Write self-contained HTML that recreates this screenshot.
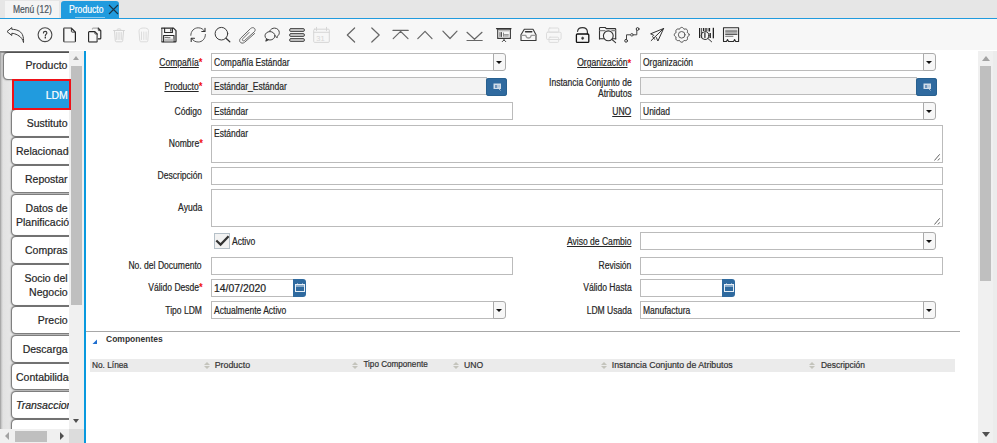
<!DOCTYPE html>
<html><head><meta charset="utf-8">
<style>
*{box-sizing:border-box}
html,body{margin:0;padding:0}
body{width:997px;height:443px;overflow:hidden;position:relative;background:#fff;font-family:"Liberation Sans",sans-serif;color:#333}
.lbl,.fld,.tab span,.ttl,.hdr{-webkit-text-stroke:0.2px currentColor}
.a{position:absolute}
.lbl{position:absolute;font-size:10px;letter-spacing:0;white-space:nowrap;text-align:right;color:#262626;line-height:11px;transform:scaleX(0.855);transform-origin:100% 50%}
.u{text-decoration:underline;text-underline-offset:1px}
.req{color:#f01010;font-size:11px;font-weight:bold;vertical-align:top;position:relative;top:0.6px;letter-spacing:0;margin-left:0;line-height:11px;-webkit-text-stroke:0}
.fld{position:absolute;border:1px solid #bbb;background:#fff;font-size:10px;letter-spacing:0;white-space:nowrap;color:#262626;padding-left:2px;line-height:15px}
.gray{background:#f3f3f3}
.fld .a{transform:scaleX(0.85);transform-origin:0 50%}
.ddb{position:absolute;border:1px solid #aaa;border-radius:0 3px 3px 0;background:#f7f7f7}
.ddb:after{content:"";position:absolute;left:2px;top:7px;border-left:3px solid transparent;border-right:3px solid transparent;border-top:3px solid #111}
.bbtn{position:absolute;background:#2f6a9f;border-radius:3px}
.tab{position:absolute;left:12px;width:80px;background:#fff;border-radius:4px 0 0 4px;box-shadow:0 0 1.5px 0.5px rgba(0,0,0,.55);font-size:10.5px;color:#262626;line-height:12px;white-space:nowrap;overflow:hidden}
.tab span{position:absolute;right:25px;text-align:right}
.tab span.ov{right:auto;left:4px;text-align:left}
.hdr{position:absolute;font-size:9px;white-space:nowrap;color:#333;line-height:11px}
.sort{position:absolute;width:6px;height:8px}
.sort:before{content:"";position:absolute;left:0;top:0;border-left:3px solid transparent;border-right:3px solid transparent;border-bottom:3px solid #c4c4bc}
.sort:after{content:"";position:absolute;left:0;top:4px;border-left:3px solid transparent;border-right:3px solid transparent;border-top:3px solid #c4c4bc}
.ic{position:absolute;top:26px}
</style></head><body>

<!-- top tab bar -->
<div class="a" style="left:0;top:0;width:997px;height:18px;background:#e6e6e6"></div>
<div class="a" style="left:5px;top:1px;width:54px;height:17px;background:#f4f4f4"></div>
<div class="a ttl" style="left:13px;top:3.8px;font-size:10px;color:#4b5560;line-height:12px;white-space:nowrap;transform:scaleX(0.85);transform-origin:0 50%">Menú (12)</div>
<div class="a" style="left:61px;top:1px;width:58px;height:17px;background:#219bde;border-radius:3px 3px 0 0"></div>
<div class="a ttl" style="left:69px;top:4px;font-size:10px;color:#fff;line-height:12px;white-space:nowrap;transform:scaleX(0.86);transform-origin:0 50%">Producto</div>
<div class="a" style="left:75px;top:17px;width:30px;height:1px;background:#8ccbef"></div>
<svg class="a" style="left:108px;top:4px" width="11" height="11" viewBox="0 0 11 11"><path d="M1 1L10 10M10 1L1 10" stroke="#1b3446" stroke-width="1.1" fill="none"/></svg>
<div class="a" style="left:0;top:18px;width:997px;height:1px;background:#219bde"></div>

<!-- toolbar -->
<div class="a" style="left:0;top:19px;width:997px;height:31px;background:#f7f7f7"></div>
<div id="toolbar">
<svg class="a" style="left:0;top:0" width="760" height="50" viewBox="0 0 760 50">
<g fill="none" stroke-linecap="round" stroke-linejoin="round">
<!-- undo -->
<path d="M7.3 31.3L11.8 27.6V29.3C16.3 29.4 20.6 30.8 22.4 34.6C23.5 37 23.7 40 23.5 42.5C22.9 39.6 21.3 36.9 17.5 35C15.6 34 13.6 33.3 11.8 33.3V35.1Z" stroke="#3a3a3a" stroke-width="1"/>
<!-- help -->
<circle cx="45" cy="34.7" r="6.9" stroke="#4a4a4a" stroke-width="1.1"/>
<path d="M43.4 33C43.4 31.9 44.2 31.4 45.2 31.4C46.2 31.4 46.9 32 46.9 32.9C46.9 34 45.3 34.3 45.3 35.8" stroke="#3a3a3a" stroke-width="1.1"/>
<path d="M45.3 37.2V37.9" stroke="#3a3a3a" stroke-width="1.4"/>
<!-- new -->
<path d="M63.8 41V28.9C63.8 28.5 64.1 28.2 64.5 28.2H71.4L75.4 32.1V41C75.4 41.4 75.1 41.7 74.7 41.7H64.5C64.1 41.7 63.8 41.4 63.8 41Z" stroke="#222" stroke-width="1.2"/>
<path d="M64.8 28.2H71M64.8 41.7H74.4" stroke="#a8a8a8" stroke-width="1.2"/>
<path d="M71.4 28.4V31.4C71.4 31.8 71.7 32.1 72.1 32.1H75.1" stroke="#333" stroke-width="1"/>
<!-- copy -->
<path d="M98.3 28.1L100.8 30.6V38.3C100.8 38.6 100.6 38.9 100.3 38.9H97.6" stroke="#222" stroke-width="1.1"/>
<path d="M92.4 29V28.6C92.4 28.3 92.6 28.1 92.9 28.1H98.3" stroke="#999" stroke-width="1"/>
<path d="M98.3 28.3V30.1C98.3 30.4 98.5 30.6 98.8 30.6H100.6" stroke="#333" stroke-width="0.9"/>
<path d="M88.6 32.3C88.6 31.9 88.9 31.6 89.3 31.6H94.8L97.2 34V41.2C97.2 41.6 96.9 41.9 96.5 41.9H89.3C88.9 41.9 88.6 41.6 88.6 41.2Z" stroke="#222" stroke-width="1.1"/>
<path d="M97.2 35V41M89.5 41.9H96" stroke="#888" stroke-width="1.1"/>
<path d="M94.8 31.8V33.5C94.8 33.8 95 34 95.3 34H97" stroke="#444" stroke-width="0.9"/>
<!-- trash disabled -->
<g stroke="#d4d4d4" stroke-width="1">
<path d="M113.6 30.5H124.4M116.5 30.3C116.8 28.3 121.2 28.3 121.5 30.3M114.5 30.7L115.3 40.7C115.4 41.5 115.8 41.8 116.5 41.8H121.5C122.2 41.8 122.6 41.5 122.7 40.7L123.6 30.7"/>
<path d="M116.8 32.5V39.5M119 32.5V39.5M121.2 32.5V39.5"/>
</g>
<g stroke="#dcdcdc" stroke-width="1">
<path d="M139 30.5C139 28.5 141.5 28 143.8 28C146.2 28 148.5 28.5 148.5 30.5L147.8 40.8C147.7 41.5 147.3 41.8 146.6 41.8H141C140.3 41.8 139.9 41.5 139.8 40.8Z"/>
<path d="M141.5 32V39.5M143.8 32V39.5M146.1 32V39.5"/>
</g>
<!-- save -->
<path d="M161.6 28.2H173.5L176 30.7V41.2C176 41.5 175.7 41.8 175.4 41.8H162.2C161.9 41.8 161.6 41.5 161.6 41.2Z" stroke="#2a2a2a" stroke-width="1.2"/>
<path d="M161.6 29V41.2" stroke="#888" stroke-width="1.2"/>
<path d="M164.6 28.3V32.5H172.4V28.3" stroke="#2a2a2a" stroke-width="1.1"/>
<path d="M170.8 29.3V31.2" stroke="#2a2a2a" stroke-width="1"/>
<path d="M163.6 41.6V35.5H174V41.6" stroke="#2a2a2a" stroke-width="1.1"/>
<rect x="164.2" y="38.7" width="9.2" height="2.8" fill="#bdbdbd" stroke="none"/>
<path d="M165 37.4H167.5M168 37.7H170" stroke="#555" stroke-width="0.9"/>
<!-- refresh -->
<path d="M190.8 35.3C190.8 31 194.2 27.8 198.2 27.8C201.3 27.8 203.4 29.3 204.5 31.2" stroke="#555" stroke-width="1"/>
<path d="M205 28.2V31.5H201.8" stroke="#333" stroke-width="1.1"/>
<path d="M205.4 34.5C205.4 38.8 202.2 42 198.2 42C195.2 42 193 40.6 191.9 38.6" stroke="#555" stroke-width="1"/>
<path d="M191.2 41.5V38.3H194.5" stroke="#333" stroke-width="1.1"/>
<!-- find -->
<circle cx="221.4" cy="33.7" r="6.3" stroke="#3a3a3a" stroke-width="1"/>
<path d="M226 38.3L229.8 41.8" stroke="#333" stroke-width="1.2"/>
<!-- attach -->
<path d="M254.6 33.5L244.6 42.3C243 43.6 240.8 43.4 239.9 41.7C239.3 40.4 239.7 39.1 240.7 38.2L250.5 28.6C251.8 27.4 253.7 27.3 254.7 28.6C255.5 29.7 255.2 31 254.2 31.9L244.6 40.5C243.9 41.1 242.9 41 242.5 40.3C242.2 39.7 242.4 39.1 243 38.5L249 32.5" stroke="#666" stroke-width="1"/>
<!-- chat -->
<path d="M269.6 31C270.6 29.2 272.6 28.1 274.5 28.1C277.2 28.1 279.3 30.1 279.3 32.6C279.3 34.3 278.5 35.5 277.2 36.4L277.3 37.6L275.9 36.9" stroke="#444" stroke-width="1"/>
<ellipse cx="270" cy="35.8" rx="5" ry="4.2" stroke="#444" stroke-width="1"/>
<path d="M266.5 39L265.8 41.2L268.3 39.8" stroke="#333" stroke-width="1" fill="#444"/>
<!-- menu bars -->
<g stroke="#555" stroke-width="1" fill="#bdbdbd">
<rect x="289.5" y="28.5" width="15" height="3" rx="1.5"/>
<rect x="289.5" y="33.5" width="15" height="3" rx="1.5"/>
<rect x="289.5" y="38.5" width="15" height="3" rx="1.5"/>
</g>
<!-- calendar disabled -->
<g stroke="#d6d6d6" stroke-width="1">
<rect x="313.7" y="29.2" width="15.6" height="13.2" rx="1"/>
<path d="M313.8 32.3H329.2M316.5 27.3V30.5M326.5 27.3V30.5"/>
</g>
<text x="316.3" y="40.6" font-family="Liberation Sans" font-size="7.5" fill="#d6d6d6" stroke="none">31</text>
<!-- chevrons -->
<g stroke="#666" stroke-width="1.2">
<path d="M354.6 28L347.3 35L354.6 42"/>
<path d="M371.8 28L379.2 35L371.8 42"/>
<path d="M393 30.4H408.2M393.2 38.6L400.6 31.4L408 38.6"/>
<path d="M417.8 38.6L425 31.3L432 38.6"/>
<path d="M442.9 31.2L450 38.5L457 31.2"/>
<path d="M467 32.3L474.5 39.3L482 32.3M467 40.5H482.2"/>
</g>
<!-- presentation -->
<path d="M496.5 28.7H511" stroke="#333" stroke-width="1.2"/>
<rect x="497.7" y="29.2" width="12.7" height="9.2" stroke="#3a3a3a" stroke-width="1.1"/>
<rect x="498.3" y="29.8" width="11.5" height="1.6" fill="#bbb" stroke="none"/>
<path d="M500 32.5V36.5M501.5 32.5V36.5" stroke="#555" stroke-width="1"/>
<path d="M503.5 33V36.3M504.5 34.7H508.3M504.5 36H508.3" stroke="#888" stroke-width="1"/>
<path d="M504 39V40M502.3 41.6L504 39.9L505.7 41.6" stroke="#444" stroke-width="1"/>
<!-- archive -->
<path d="M524.3 29.2H533L536 34.8V40.5H521V34.8Z" stroke="#3a3a3a" stroke-width="1.1"/>
<path d="M525.5 31.7H531.8" stroke="#333" stroke-width="1.4"/>
<path d="M521.5 35.3H525.8C526.3 37.4 527.3 38 528.5 38C529.7 38 530.7 37.4 531.2 35.3H535.5" stroke="#999" stroke-width="1.3"/>
<!-- print disabled -->
<g stroke="#dcdcdc" stroke-width="1">
<rect x="548.8" y="28" width="10" height="4.2" rx="1"/>
<rect x="546.5" y="32.2" width="14.6" height="7.3" rx="1.2"/>
<rect x="549" y="37.2" width="9.6" height="5.2" rx="1"/>
</g>
<!-- lock -->
<path d="M577.6 31.3C577.8 29 579.8 27.6 582.5 27.6C585.2 27.6 587.3 29.2 587.4 31.8V34" stroke="#333" stroke-width="1.2"/>
<rect x="576.4" y="34" width="12.4" height="8.4" rx="1" stroke="#111" stroke-width="1.3"/>
<ellipse cx="582.6" cy="38.2" rx="1" ry="1.3" fill="#333" stroke="#555" stroke-width="0.6"/>
<!-- zoom across -->
<path d="M599.5 39V28.2C599.5 27.8 599.8 27.5 600.2 27.5H605.2L606.3 28.6H615C615.4 28.6 615.7 28.9 615.7 29.3V39" stroke="#333" stroke-width="1.1"/>
<path d="M599.5 38.8H603.5M612.8 38.8H615.7" stroke="#333" stroke-width="1.1"/>
<path d="M600 30.6H605M611.8 30.6H615.2" stroke="#888" stroke-width="1.2"/>
<circle cx="608.3" cy="35.8" r="4.9" stroke="#333" stroke-width="1.1"/>
<path d="M611.8 39.3L615.6 42.6" stroke="#333" stroke-width="1.1"/>
<!-- workflow -->
<path d="M626.5 39.5V34.8H636.8V30.2" stroke="#444" stroke-width="1"/>
<circle cx="626.1" cy="40.8" r="1.4" stroke="#333" stroke-width="1" fill="#f6f6f6"/>
<circle cx="631.9" cy="34.8" r="1.3" stroke="#555" stroke-width="1" fill="#f6f6f6"/>
<circle cx="637.6" cy="29" r="1.4" stroke="#333" stroke-width="1" fill="#f6f6f6"/>
<!-- send -->
<path d="M663.6 28.5L650.6 33.8L653.8 35.4M663.6 28.5L657.9 41L656.3 37.5M663.6 28.5L651.2 40.6M652.6 36.6L654.6 39.3" stroke="#333" stroke-width="1"/>
<!-- gear -->
<path d="M689.10 34.80 L689.06 35.16 L688.96 35.51 L688.79 35.85 L688.56 36.16 L688.27 36.45 L687.95 36.70 L687.61 36.91 L687.24 37.10 L687.37 37.48 L687.46 37.88 L687.51 38.28 L687.51 38.68 L687.45 39.07 L687.34 39.43 L687.16 39.75 L686.93 40.03 L686.65 40.26 L686.33 40.44 L685.97 40.55 L685.58 40.61 L685.18 40.61 L684.78 40.56 L684.38 40.47 L684.00 40.34 L683.81 40.71 L683.60 41.05 L683.35 41.37 L683.06 41.66 L682.75 41.89 L682.41 42.06 L682.06 42.16 L681.70 42.20 L681.34 42.16 L680.99 42.06 L680.65 41.89 L680.34 41.66 L680.05 41.37 L679.80 41.05 L679.59 40.71 L679.40 40.34 L679.02 40.47 L678.62 40.56 L678.22 40.61 L677.82 40.61 L677.43 40.55 L677.07 40.44 L676.75 40.26 L676.47 40.03 L676.24 39.75 L676.06 39.43 L675.95 39.07 L675.89 38.68 L675.89 38.28 L675.94 37.88 L676.03 37.48 L676.16 37.10 L675.79 36.91 L675.45 36.70 L675.13 36.45 L674.84 36.16 L674.61 35.85 L674.44 35.51 L674.34 35.16 L674.30 34.80 L674.34 34.44 L674.44 34.09 L674.61 33.75 L674.84 33.44 L675.13 33.15 L675.45 32.90 L675.79 32.69 L676.16 32.50 L676.03 32.12 L675.94 31.72 L675.89 31.32 L675.89 30.92 L675.95 30.53 L676.06 30.17 L676.24 29.85 L676.47 29.57 L676.75 29.34 L677.07 29.16 L677.43 29.05 L677.82 28.99 L678.22 28.99 L678.62 29.04 L679.02 29.13 L679.40 29.26 L679.59 28.89 L679.80 28.55 L680.05 28.23 L680.34 27.94 L680.65 27.71 L680.99 27.54 L681.34 27.44 L681.70 27.40 L682.06 27.44 L682.41 27.54 L682.75 27.71 L683.06 27.94 L683.35 28.23 L683.60 28.55 L683.81 28.89 L684.00 29.26 L684.38 29.13 L684.78 29.04 L685.18 28.99 L685.58 28.99 L685.97 29.05 L686.33 29.16 L686.65 29.34 L686.93 29.57 L687.16 29.85 L687.34 30.17 L687.45 30.53 L687.51 30.92 L687.51 31.32 L687.46 31.72 L687.37 32.12 L687.24 32.50 L687.61 32.69 L687.95 32.90 L688.27 33.15 L688.56 33.44 L688.79 33.75 L688.96 34.09 L689.06 34.44Z" stroke="#444" stroke-width="1"/>
<circle cx="681.7" cy="34.8" r="3.3" stroke="#555" stroke-width="0.95"/>
<!-- barcode -->
<g stroke="none" fill="#222">
<rect x="699" y="28" width="1.2" height="10"/>
<rect x="701.3" y="28" width="0.8" height="10"/>
<rect x="703" y="28" width="1.3" height="3"/>
<rect x="705" y="28" width="2.5" height="3.5" fill="#666"/>
<rect x="708.5" y="28" width="1.6" height="3.5"/>
<rect x="709.5" y="33" width="1.4" height="5"/>
<rect x="712.7" y="27.8" width="1.3" height="10.5"/>
<rect x="704.3" y="32.6" width="1.2" height="5.3"/>
</g>
<circle cx="705" cy="35.6" r="3.9" stroke="#333" stroke-width="1"/>
<path d="M707.8 38.4L711.6 41.8" stroke="#333" stroke-width="1"/>
<!-- receipt -->
<path d="M723.5 41.5V27.7H738.6V41.5H735.7L734.6 39.6L733.5 41.5H728.6L727.5 39.6L726.4 41.5Z" stroke="#2a2a2a" stroke-width="1.1"/>
<path d="M725.6 30.3H737M725.6 31.6H737M725.6 32.9H737" stroke="#777" stroke-width="0.9"/>
<path d="M725.6 34.3H737" stroke="#333" stroke-width="1"/>
<path d="M725.6 36.3H733" stroke="#666" stroke-width="0.9"/>
</g>
</svg>
</div>

<!-- left panel -->
<div class="a" style="left:0;top:51px;width:84px;height:392px;background:linear-gradient(to right,#9a9a9a 0,#c8c8c8 1.5px,#e2e2e2 3px,#e6e6e6 10px,#e6e6e6 100%)"></div>
<div class="a" style="left:0;top:51px;width:69px;height:378px;overflow:hidden">
  <div class="a" style="left:0;top:0;width:69px;height:2px;background:linear-gradient(#7a7a7a,#9c9c9c)"></div>
  <div class="tab" style="left:4px;top:2px;height:26px;width:88px"><span style="right:24.599999999999994px;top:6px">Producto</span></div>

  <div class="tab" style="top:59px;height:26px"><span style="right:24.4px;top:6px;line-height:14px;">Sustituto</span></div>
  <div class="tab" style="top:87px;height:26px"><span class="ov" style="top:6px;line-height:14px;">Relacionado</span></div>
  <div class="tab" style="top:115px;height:26px"><span style="right:24.4px;top:6px;line-height:14px;">Repostar</span></div>
  <div class="tab" style="top:144px;height:39.5px"><span style="right:24.4px;top:5.9px;line-height:14.2px">Datos de</span><span class="ov" style="top:20.1px;line-height:14.2px">Planificación</span></div>
  <div class="tab" style="top:186px;height:26px"><span style="right:24.4px;top:6px;line-height:14px;">Compras</span></div>
  <div class="tab" style="top:214px;height:39.5px"><span style="right:24.4px;top:5.9px;line-height:14.2px">Socio del<br>Negocio</span></div>
  <div class="tab" style="top:256px;height:25.5px"><span style="right:24.4px;top:6px;line-height:14px;">Precio</span></div>
  <div class="tab" style="top:284.5px;height:26px"><span style="right:24.4px;top:6px;line-height:14px;">Descarga</span></div>
  <div class="tab" style="top:312.5px;height:25.5px"><span class="ov" style="top:6px;line-height:14px;">Contabilidad</span></div>
  <div class="tab" style="top:341px;height:26px"><span class="ov" style="top:6px;line-height:14px;font-style:italic;">Transacciones</span></div>
  <div class="tab" style="top:369px;height:26px"></div>
</div>
<!-- left v scrollbar -->
<div class="a" style="left:69px;top:51px;width:15px;height:378px;background:#f0f0f0"></div>
<div class="a" style="left:73px;top:56px;border-left:3.5px solid transparent;border-right:3.5px solid transparent;border-bottom:4.5px solid #a3a3a3"></div>
<div class="a" style="left:71px;top:66px;width:11px;height:239px;background:#bfbfbf"></div>
<div class="a" style="left:73px;top:419px;border-left:3.5px solid transparent;border-right:3.5px solid transparent;border-top:4.5px solid #505050"></div>
<!-- left h scrollbar -->
<div class="a" style="left:0;top:429px;width:69px;height:14px;background:#f0f0f0"></div>
<div class="a" style="left:5px;top:432px;border-top:4px solid transparent;border-bottom:4px solid transparent;border-right:4px solid #a3a3a3"></div>
<div class="a" style="left:15px;top:431px;width:32px;height:11px;background:#bfbfbf"></div>
<div class="a" style="left:60px;top:432px;border-top:4px solid transparent;border-bottom:4px solid transparent;border-left:4px solid #505050"></div>
<div class="a" style="left:69px;top:429px;width:15px;height:14px;background:#dcdcdc"></div>
<div class="a" style="left:12px;top:79px;width:59px;height:30.5px;background:#ee1118"></div>
<div class="a" style="left:14px;top:81px;width:55px;height:26.5px;background:#219bde"><span class="a ttl" style="right:1.2px;top:7.46px;color:#fff;font-size:10.5px;line-height:14px;white-space:nowrap">LDM</span></div>
<!-- blue splitter line -->
<div class="a" style="left:84px;top:51px;width:2px;height:392px;background:#0899de"></div>

<!-- right scrollbar -->
<div class="a" style="left:978px;top:51px;width:19px;height:392px;background:#f0f0f0"></div>
<div class="a" style="left:993px;top:51px;width:4px;height:392px;background:#ececec"></div>
<div class="a" style="left:982px;top:56px;border-left:4px solid transparent;border-right:4px solid transparent;border-bottom:5px solid #a3a3a3"></div>
<div class="a" style="left:980px;top:66px;width:11px;height:215px;background:#bfbfbf"></div>
<div class="a" style="left:982px;top:432px;border-left:4px solid transparent;border-right:4px solid transparent;border-top:5px solid #505050"></div>

<!--FORM-->
<div class="lbl" style="right:794.5px;top:56.6px"><span class="u">Compañía</span><span class="req">*</span></div>
<div class="fld" style="left:211px;top:53px;width:283px;height:18px"><div class="a" style="left:2px;top:2.6px;line-height:11px">Compañía Estándar</div></div>
<div class="ddb" style="left:493px;top:53px;width:13px;height:18px"></div>
<div class="lbl" style="right:365.5px;top:57.0px"><span class="u">Organización</span><span class="req">*</span></div>
<div class="fld" style="left:640px;top:53px;width:284px;height:18px"><div class="a" style="left:2px;top:3.0px;line-height:11px">Organización</div></div>
<div class="ddb" style="left:923px;top:53px;width:13px;height:18px"></div>
<div class="lbl" style="right:794.5px;top:80.7px"><span class="u">Producto</span><span class="req">*</span></div>
<div class="fld gray" style="left:211px;top:77px;width:276px;height:18px"><div class="a" style="left:2px;top:2.7px;line-height:11px">Estándar_Estándar</div></div>
<div class="bbtn" style="left:486px;top:77.5px;width:21px;height:18px;box-shadow:inset 0 0 0 1px #28608f"><svg class="a" style="left:6.5px;top:5px" width="9" height="8" viewBox="0 0 9 8"><rect x="0.5" y="0.5" width="7.5" height="5.5" fill="#d2deea"/><rect x="2" y="2" width="2.3" height="3" fill="#7096bd"/><rect x="5.3" y="2" width="1.6" height="2.5" fill="#a9c0d8"/><path d="M5.8 5.8L7.6 7.5" stroke="#c0d0e0" stroke-width="0.9"/></svg></div>
<div class="lbl" style="right:365.5px;top:76.6px;line-height:11px">Instancia Conjunto de<br>Atributos</div>
<div class="fld gray" style="left:640px;top:77px;width:277px;height:18px"></div>
<div class="bbtn" style="left:916px;top:77.5px;width:21px;height:18px;box-shadow:inset 0 0 0 1px #28608f"><svg class="a" style="left:6.5px;top:5px" width="9" height="8" viewBox="0 0 9 8"><rect x="0.5" y="0.5" width="7.5" height="5.5" fill="#d2deea"/><rect x="2" y="2" width="2.3" height="3" fill="#7096bd"/><rect x="5.3" y="2" width="1.6" height="2.5" fill="#a9c0d8"/><path d="M5.8 5.8L7.6 7.5" stroke="#c0d0e0" stroke-width="0.9"/></svg></div>
<div class="lbl" style="right:795px;top:105.8px">Código</div>
<div class="fld" style="left:211px;top:102px;width:302px;height:18px"><div class="a" style="left:2px;top:2.8px;line-height:11px">Estándar</div></div>
<div class="lbl" style="right:365.5px;top:105.9px"><span class="u">UNO</span></div>
<div class="fld" style="left:640px;top:102px;width:284px;height:18px"><div class="a" style="left:2px;top:2.9px;line-height:11px">Unidad</div></div>
<div class="ddb" style="left:923px;top:102px;width:13px;height:18px"></div>
<div class="lbl" style="right:794.5px;top:137.9px">Nombre<span class="req">*</span></div>
<div class="fld" style="left:211px;top:125px;width:732px;height:38px"><div class="a" style="left:2px;top:1.5px;line-height:11px">Estándar</div><svg class="a" style="right:0px;bottom:1.5px" width="8" height="8" viewBox="0 0 8 8"><path d="M0.5 7.5L6.7 1.3M4.6 7.5L6.7 5.4" stroke="#555" stroke-width="1"/></svg></div>
<div class="lbl" style="right:795px;top:169.7px">Descripción</div>
<div class="fld" style="left:211px;top:167px;width:732px;height:18px"></div>
<div class="lbl" style="right:795px;top:201.8px">Ayuda</div>
<div class="fld" style="left:211px;top:189px;width:732px;height:38px"><svg class="a" style="right:0px;bottom:1.5px" width="8" height="8" viewBox="0 0 8 8"><path d="M0.5 7.5L6.7 1.3M4.6 7.5L6.7 5.4" stroke="#555" stroke-width="1"/></svg></div>
<div class="a" style="left:214px;top:233px;width:16px;height:16px;border:1px solid #b5c0c8;background:#f2f2f2"></div>
<svg class="a" style="left:214px;top:233px" width="16" height="16" viewBox="0 0 16 16"><path d="M2.3 7.5L6.6 11.6L14.6 3.3" stroke="#333" stroke-width="2.2" fill="none" stroke-linejoin="miter"/></svg>
<div class="lbl" style="left:232px;top:236.2px;text-align:left;transform-origin:0 50%">Activo</div>
<div class="lbl" style="right:365.5px;top:235.9px"><span class="u">Aviso de Cambio</span></div>
<div class="fld" style="left:640px;top:232px;width:284px;height:18px"></div>
<div class="ddb" style="left:923px;top:232px;width:13px;height:18px"></div>
<div class="lbl" style="right:795px;top:259.7px">No. del Documento</div>
<div class="fld" style="left:211px;top:257px;width:302px;height:18px"></div>
<div class="lbl" style="right:365.5px;top:260.0px">Revisión</div>
<div class="fld" style="left:640px;top:257px;width:303px;height:18px"></div>
<div class="lbl" style="right:794.5px;top:281.7px">Válido Desde<span class="req">*</span></div>
<div class="fld" style="left:211px;top:279px;width:83px;height:18px"><div class="a" style="left:2px;top:2.6px;font-size:10.4px;letter-spacing:0;line-height:12px;color:#222;transform:none">14/07/2020</div></div>
<div class="bbtn" style="left:293px;top:279px;width:13px;height:18px;border-radius:0 3px 3px 0"><svg class="a" style="left:1.5px;top:4px" width="10" height="9" viewBox="0 0 10 9"><rect x="0.5" y="1.5" width="9" height="7" fill="none" stroke="#e6eef6" stroke-width="1"/><path d="M0.5 3H9.5" stroke="#e6eef6" stroke-width="1"/><path d="M2.5 0.5V2M7.5 0.5V2" stroke="#e6eef6" stroke-width="1"/></svg></div>
<div class="lbl" style="right:365.5px;top:281.5px">Válido Hasta</div>
<div class="fld" style="left:640px;top:279px;width:83px;height:18px"></div>
<div class="bbtn" style="left:722px;top:279px;width:13px;height:18px;border-radius:0 3px 3px 0"><svg class="a" style="left:1.5px;top:4px" width="10" height="9" viewBox="0 0 10 9"><rect x="0.5" y="1.5" width="9" height="7" fill="none" stroke="#e6eef6" stroke-width="1"/><path d="M0.5 3H9.5" stroke="#e6eef6" stroke-width="1"/><path d="M2.5 0.5V2M7.5 0.5V2" stroke="#e6eef6" stroke-width="1"/></svg></div>
<div class="lbl" style="right:795px;top:304.8px">Tipo LDM</div>
<div class="fld" style="left:211px;top:301px;width:283px;height:18px"><div class="a" style="left:2px;top:2.8px;line-height:11px">Actualmente Activo</div></div>
<div class="ddb" style="left:493px;top:301px;width:13px;height:18px"></div>
<div class="lbl" style="right:365.5px;top:304.7px">LDM Usada</div>
<div class="fld" style="left:640px;top:301px;width:284px;height:18px"><div class="a" style="left:2px;top:2.7px;line-height:11px">Manufactura</div></div>
<div class="ddb" style="left:923px;top:301px;width:13px;height:18px"></div>
<div class="a" style="left:86px;top:331px;width:874px;height:1px;background:#a8a8a8"></div>
<svg class="a" style="left:92px;top:339px" width="6" height="6" viewBox="0 0 6 6"><path d="M5 0.5V5H0.5Z" fill="#1f6fd0"/></svg>
<div class="a" style="left:106px;top:333.6px;font-size:8.5px;font-weight:bold;line-height:10px;white-space:nowrap;color:#333">Componentes</div>
<div class="a" style="left:90px;top:359px;width:865px;height:13px;background:#ebebeb"></div>
<div class="hdr" style="left:92px;top:359.9px;font-size:8.3px;line-height:10px">No. Línea</div>
<div class="sort" style="left:204px;top:362px"></div>
<div class="hdr" style="left:214.7px;top:359.9px;font-size:8.85px;line-height:10px">Producto</div>
<div class="sort" style="left:352px;top:362px"></div>
<div class="hdr" style="left:363.4px;top:359.9px;font-size:8.13px;line-height:10px">Tipo Componente</div>
<div class="sort" style="left:452.6px;top:362px"></div>
<div class="hdr" style="left:464px;top:359.9px;font-size:8.6px;line-height:10px">UNO</div>
<div class="sort" style="left:601px;top:362px"></div>
<div class="hdr" style="left:611.8px;top:359.9px;font-size:8.74px;line-height:10px">Instancia Conjunto de Atributos</div>
<div class="sort" style="left:809px;top:362px"></div>
<div class="hdr" style="left:821px;top:359.9px;font-size:8.42px;line-height:10px">Descripción</div>
<!--/FORM-->
</body></html>
